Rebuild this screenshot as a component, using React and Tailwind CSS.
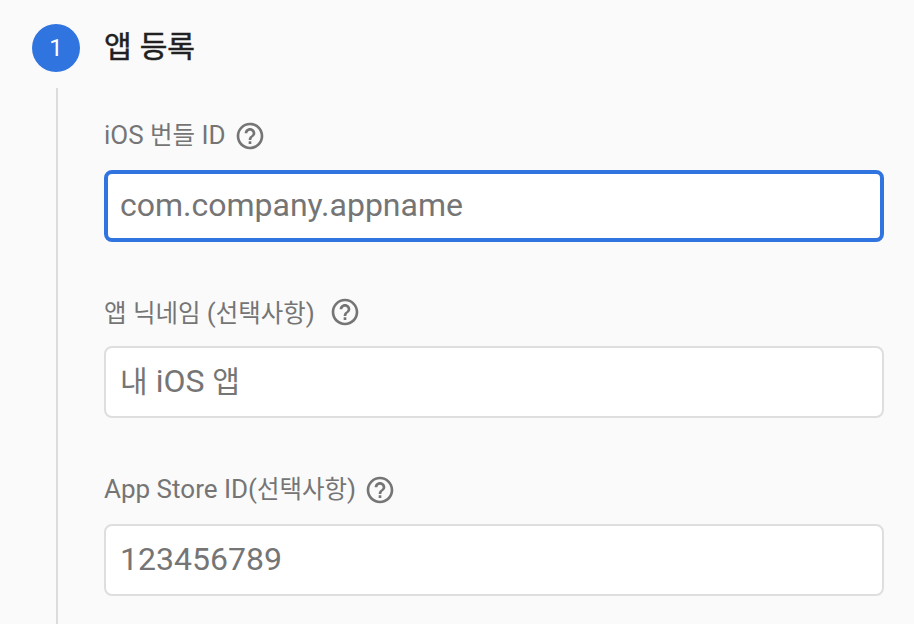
function Help() {
  return (
    <svg viewBox="0 0 24 24" className="h-8 w-8 shrink-0 fill-[#757575]">
      <path d="M11 18h2v-2h-2v2zm1-16C6.48 2 2 6.48 2 12s4.480 10 10 10 10-4.480 10-10S17.520 2 12 2zm0 18c-4.410 0-8-3.590-8-8s3.590-8 8-8 8 3.590 8 8-3.590 8-8 8zm0-14c-2.210 0-4 1.790-4 4h2c0-1.100.9-2 2-2s2 .9 2 2c0 2-3 1.750-3 5h2c0-2.250 3-2.500 3-5 0-2.210-1.790-4-4-4z" />
    </svg>
  );
}

function Ko({ children }) {
  return <span className="text-[0.94em]">{children}</span>;
}

function Field({ label, placeholder, labelClass, inputClass, focused }) {
  return (
    <div className="h-[177px]">
      <div className="flex h-8 items-center">
        <span className={`whitespace-nowrap text-[26px] leading-8 text-[#757575] ${labelClass}`}>{label}</span>
        <Help />
      </div>
      <div
        className={`flex h-[72px] items-center rounded-lg bg-white pb-0.5 text-[32px] leading-none text-[#757575] ${focused ? "border-4 border-[#3074e0] px-3" : "border-2 border-[#dedede] px-3.5"} ${inputClass}`}
      >
        <span className="whitespace-nowrap">{placeholder}</span>
      </div>
    </div>
  );
}

export default function App() {
  return (
    <main className="flex h-[624px] w-[914px] overflow-hidden bg-[#fafafa] pl-8 font-[Roboto,'Noto_Sans_CJK_KR',sans-serif]">
      <div className="flex w-12 shrink-0 flex-col items-center pt-6">
        <div className="flex h-12 w-12 shrink-0 items-center justify-center rounded-full bg-[#3074e0] text-2xl text-white">1</div>
        <div className="mt-4 mr-[-2px] w-0.5 flex-1 bg-[#dcdcdc]" />
      </div>
      <div className="ml-6 w-[780px] shrink-0">
        <h1 className="h-[120px] pt-[26px] text-[32px] leading-10 text-[#212121] [-webkit-text-stroke:0.5px_#212121]">
          <Ko>앱</Ko> <Ko>등록</Ko>
        </h1>
        <Field
          label={<>iOS <Ko>번들</Ko> ID</>}
          placeholder="com.company.appname"
          labelClass="mr-2 pb-0.5"
          inputClass="mt-[18px]"
          focused
        />
        <div className="-mt-px h-[178px]">
          <Field
            label={<><Ko>앱</Ko> <Ko>닉네임</Ko> (<Ko>선택사항</Ko>)</>}
            placeholder={<><Ko>내</Ko> iOS <Ko>앱</Ko></>}
            labelClass="mr-[14px] pt-0.5"
            inputClass="mt-[18px]"
          />
        </div>
        <Field
          label={<>App Store ID(<Ko>선택사항</Ko>)</>}
          placeholder="123456789"
          labelClass="mr-2 pb-0.5"
          inputClass="mt-[18px]"
        />
      </div>
    </main>
  );
}
